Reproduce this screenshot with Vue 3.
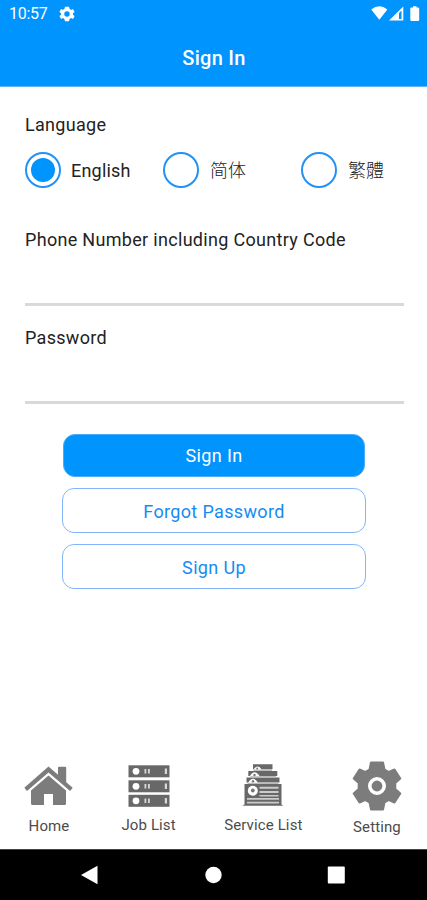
<script setup>
import { ref } from 'vue'

const language = ref('en')
const languages = [
  { id: 'en', label: 'English' },
  { id: 'sc', label: '简体' },
  { id: 'tc', label: '繁體' },
]
const phone = ref('')
const password = ref('')
</script>

<template>
  <main class="screen">
    <header class="header">
      <div class="status">
        <span class="clock">10:57</span>
        <svg class="gear" width="16" height="16" viewBox="2 2 20 20">
          <path fill="#fff" fill-rule="evenodd" d="M19.4 13a7.600 7.600 0 0 0 0-2l2.100-1.600-2-3.500-2.500 1a8 8 0 0 0-1.700-1L14.500 3h-5l-.8 2.900a8 8 0 0 0-1.700 1l-2.500-1-2 3.500L4.600 11a7.600 7.600 0 0 0 0 2l-2.100 1.600 2 3.500 2.500-1a8 8 0 0 0 1.700 1l.8 2.900h5l.8-2.900a8 8 0 0 0 1.700-1l2.500 1 2-3.500zM12 8.600a3.400 3.400 0 1 1 0 6.800 3.400 3.400 0 0 1 0-6.800z" />
        </svg>
        <svg class="signals" width="50" height="16" viewBox="0 0 50 16">
          <g fill="#fff">
            <path d="M1.200 3.500Q9.300-2.800 17.400 3.500L9.300 13.700z" />
            <path fill-rule="evenodd" d="M19 14.400 33.300.4v14zM29 7v6h2.500V4.500z" />
            <path d="M41.500 1.500h1.500V.2h3.500v1.300H48q1.200 0 1.200 1.200v11q0 1.200-1.200 1.200h-6.500q-1.200 0-1.200-1.200v-11q0-1.200 1.200-1.200z" />
          </g>
        </svg>
      </div>
      <h1 class="title">Sign In</h1>
    </header>

    <form class="form" @submit.prevent>
      <div class="label language">Language</div>
      <div class="radios">
        <label v-for="item in languages" :key="item.id" class="radio" @click="language = item.id">
          <span class="ring"><span v-if="language === item.id" class="dot"></span></span>
          <span :class="['radio-text', { cjk: item.id !== 'en', tc: item.id === 'tc' }]">{{ item.label }}</span>
        </label>
      </div>
      <label class="field">
        <span class="label phone">Phone Number including Country Code</span>
        <input v-model="phone" type="tel" />
      </label>
      <label class="field second">
        <span class="label pass">Password</span>
        <input v-model="password" type="password" />
      </label>
      <div class="buttons">
        <button class="button primary">Sign In</button>
        <button class="button forgot">Forgot Password</button>
        <button class="button">Sign Up</button>
      </div>
    </form>

    <nav class="tabs">
      <a class="tab home">
        <svg width="50" height="42" viewBox="0 0 50 42">
          <g fill="#7c7c7c">
            <path d="M24.500.5 34 8.700V1.700q0-1 1-1h6.200q1 0 1 1v14.600l6.500 5.500-2.600 3.300-21.600-18.700L3 25.100.3 21.800z" />
            <path d="M24.500 9.500 42 24.500v13q0 1.500-1.500 1.500H29V28h-9v11H8.500Q7 39 7 37.500v-13z" />
          </g>
        </svg>
        <span class="tab-text">Home</span>
      </a>
      <a class="tab jobs">
        <svg width="42" height="42" viewBox="0 0 42 42">
          <g v-for="y in [0, 15, 29.5]" :key="y" :transform="`translate(0 ${y})`">
            <rect x=".5" y=".3" width="41" height="12" fill="#686868" />
            <circle cx="8" cy="6.300" r="3.400" fill="#fff" />
            <path fill="#d8d8d8" d="M16.500 4h1.800v4.600h-1.800zM20 4h1.800v4.600H20zM36.800 3.500h2.200v5.500h-2.200z" />
          </g>
        </svg>
        <span class="tab-text">Job List</span>
      </a>
      <a class="tab services">
        <svg width="42" height="43" viewBox="0 0 42 43">
          <g fill="#686868">
            <path d="M11 .3h19.500v5H11zM6.300 7h29v5h-29zM4.500 13.500h33v5h-33zM2.500 20h37v20.500l1.800 1.300H.3l2.200-1.300z" />
            <path fill="#bbb" d="M11.500 5.300h18.500V7H11.500zM8 12h26v1.500H8zM5.500 18.500h31V20h-31z" />
            <path fill="#ccc" d="M17.500 22.800h19v2h-19zM17.500 27h19v2h-19zM17.500 31h19v1.500h-19zM5 34h32v1.800H5zM5 37.800h32v1.800H5z" />
          </g>
          <g fill="#fff">
            <path d="M11.500 5.500q4.500-6 8 0zM7.800 12.300q4.500-8 10 0zM6 18.800q5-8 10 0z" />
            <circle cx="10.800" cy="26.800" r="5" />
          </g>
          <g fill="#777">
            <circle cx="15.200" cy="4.600" r="1" />
            <circle cx="12.500" cy="11" r="1.200" />
            <circle cx="11" cy="17.300" r="1.200" />
            <circle cx="10.800" cy="26.500" r="1.900" />
          </g>
        </svg>
        <span class="tab-text">Service List</span>
      </a>
      <a class="tab setting">
        <svg width="50" height="50" viewBox="0 0 50 50">
          <path fill="#7c7c7c" stroke="#7c7c7c" stroke-width="2" stroke-linejoin="round" d="M19 1.500h12l1.500 7 4.500 2.500 5.500-2.500 5.800 9-5 4.500v6l5 4.500-5.800 9-5.500-2.500-4.500 2.500-1.500 7H19l-1.500-7L13 39l-5.500 2.500-5.800-9 5-4.500v-6l-5-4.500 5.800-9L13 11l4.500-2.500z" />
          <circle cx="25" cy="25" r="7.200" fill="#7c7c7c" stroke="#fff" stroke-width="3.600" />
        </svg>
        <span class="tab-text">Setting</span>
      </a>
    </nav>

    <footer class="system">
      <svg width="18" height="20" viewBox="0 0 18 20"><path fill="#fff" d="M0 10 16.500.8v18.400z" /></svg>
      <svg width="18" height="20" viewBox="0 0 18 20"><circle cx="9.500" cy="10" r="8.200" fill="#fff" /></svg>
      <svg width="18" height="20" viewBox="0 0 18 20"><rect x=".8" y="1.500" width="17" height="17" rx="1" fill="#fff" /></svg>
    </footer>
  </main>
</template>

<style>
body {
  margin: 0;
  background: #fff;
}
</style>

<style scoped>
.screen {
  width: 427px;
  height: 900px;
  display: flex;
  flex-direction: column;
  overflow: hidden;
  background: #fff;
  color: #222;
  font-family: Roboto, "Noto Sans CJK SC", sans-serif;
}
.header {
  height: 86px;
  flex: none;
  background: #0094ff;
  border-bottom: 1px solid #5fb2f8;
  color: #fff;
}
.status {
  height: 28px;
  display: flex;
  align-items: center;
  padding: 0 7px 0 9px;
}
.clock {
  font-size: 16px;
  line-height: 28px;
  width: 50px;
  letter-spacing: -0.3px;
}
.signals {
  margin-left: auto;
}
.title {
  margin: 0;
  font-size: 20px;
  font-weight: 500;
  line-height: 60px;
  text-align: center;
  letter-spacing: 0.3px;
  padding-left: 1px;
}
.form {
  display: flex;
  flex-direction: column;
  padding: 27px 23px 0 25px;
}
.label {
  display: block;
  font-size: 18px;
  line-height: 22px;
  white-space: nowrap;
  letter-spacing: 0.31px;
}
.radios {
  display: grid;
  grid-template-columns: 138px 138px auto;
  margin-top: 16px;
  height: 36px;
}
.radio {
  display: flex;
  align-items: center;
  gap: 11px;
}
.ring {
  width: 36px;
  height: 36px;
  box-sizing: border-box;
  border: 2px solid #2491f5;
  border-radius: 50%;
  display: grid;
  place-items: center;
}
.dot {
  width: 24px;
  height: 24px;
  border-radius: 50%;
  background: #0094ff;
}
.radio-text {
  font-size: 18px;
  line-height: 34px;
  letter-spacing: 0.2px;
  padding-top: 2px;
  margin-left: -1px;
}
.cjk {
  letter-spacing: 0;
  font-family: "Noto Sans CJK SC", sans-serif;
  font-weight: 300;
  padding: 0 0 2px;
  margin-left: 0;
}
.tc {
  font-family: "Noto Sans CJK TC", sans-serif;
}
.field {
  display: block;
  height: 77px;
  margin-top: 41px;
}
.second {
  margin-top: 21px;
}
.field input {
  display: block;
  box-sizing: border-box;
  width: 379px;
  height: 55px;
  padding: 12px 0 0;
  border: 0;
  border-bottom: 3px solid #d9d9d9;
  outline: 0;
  background: transparent;
  font: 18px Roboto, sans-serif;
}
.buttons {
  display: flex;
  flex-direction: column;
  gap: 11px;
  padding: 30px 38px 0 37px;
}
.button {
  height: 45px;
  box-sizing: border-box;
  border: 1px solid #83b5fa;
  border-radius: 12px;
  background: #fff;
  color: #168cf3;
  font: 18px/43px Roboto, sans-serif;
  letter-spacing: 0.35px;
  padding: 1px 0 0;
}
.primary {
  height: 43px;
  margin: 0 1px;
  padding: 0;
  line-height: 39px;
  border-color: #4dabfb;
  background: #0094ff;
  color: #fff;
}
.tabs {
  flex: 1;
  display: flex;
  align-items: flex-end;
  justify-content: space-between;
  padding: 0 25px 13px 24px;
}
.tab {
  display: flex;
  flex-direction: column;
  align-items: center;
  gap: 8px;
}
.home {
  gap: 8px;
}
.jobs {
  gap: 8px;
  margin-left: -2px;
}
.jobs,
.services {
  padding-bottom: 1px;
}
.services {
  margin-left: -1px;
}
.setting {
  gap: 6px;
  margin-bottom: -1px;
}
.tab-text {
  color: #4c4c4c;
  font-size: 15px;
  line-height: 20px;
  letter-spacing: 0.12px;
}
.system {
  height: 51px;
  flex: none;
  box-sizing: border-box;
  border-top: 1px solid #444;
  background: #000;
  display: flex;
  justify-content: space-between;
  align-items: center;
  padding: 0 82px 0 81px;
}
</style>
